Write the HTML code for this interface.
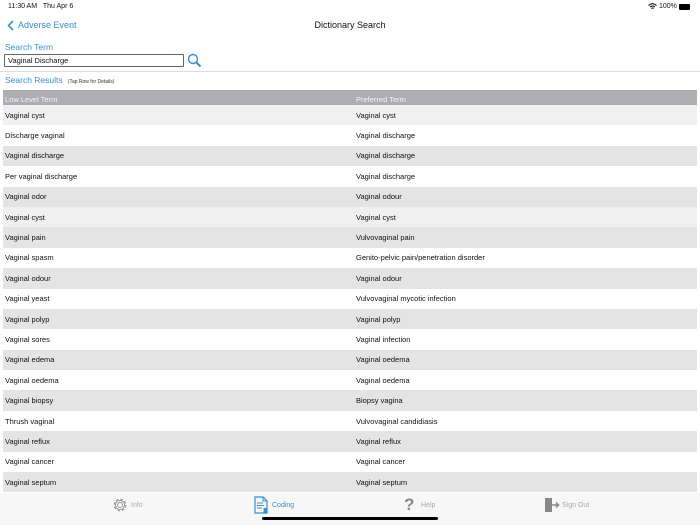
<!DOCTYPE html>
<html><head><meta charset="utf-8"><style>
*{margin:0;padding:0;box-sizing:border-box}
body{width:700px;height:525px;overflow:hidden;background:#fff;font-family:"Liberation Sans",sans-serif;position:relative;color:#111}
.abs{position:absolute}
.blue{color:#3a8fd0}
table{position:absolute;left:3px;top:90px;width:694px;border-collapse:collapse;font-size:7.5px}
td{height:20.4px;padding-left:2px;vertical-align:middle}
td+td{padding-left:0}
tr.h td{height:15px;background:#aeadb2;color:#f4f4f4;padding-top:4px}
.a{background:#f0f0f0}.b{background:#fff}.c{background:#e4e4e4}
</style></head><body>
<div class="abs" style="left:8px;top:3px;font-size:7px">11:30 AM&nbsp;&nbsp;&nbsp;Thu Apr 6</div>
<div class="abs" style="left:659px;top:3px;font-size:7px">
<svg width="9" height="7" viewBox="0 0 9 7" style="position:absolute;left:-11px;top:0"><path d="M0.5 2.5Q4.5 -1 8.5 2.5M2 4Q4.5 2 7 4M3.3 5.4Q4.5 4.5 5.7 5.4" stroke="#000" fill="none" stroke-width="1"/></svg>100%</div>
<div class="abs" style="left:679px;top:4px;width:11px;height:6px;background:#000;border-radius:1px"></div>
<svg class="abs" style="left:7px;top:20px" width="7" height="11" viewBox="0 0 7 11"><path d="M6 1L1.5 5.5L6 10" stroke="#3a8fd0" stroke-width="1.6" fill="none"/></svg>
<div class="abs blue" style="left:18px;top:20px;font-size:9px">Adverse Event</div>
<div class="abs" style="left:0;width:700px;top:20px;text-align:center;font-size:9px">Dictionary Search</div>
<div class="abs blue" style="left:5px;top:42px;font-size:8.5px">Search Term</div>
<div class="abs" style="left:4px;top:54px;width:180px;height:13px;border:1px solid #666;border-radius:1px;font-size:7.5px;padding:1px 0 0 3px">Vaginal Discharge</div>
<svg class="abs" style="left:187px;top:53px" width="15" height="15" viewBox="0 0 15 15"><circle cx="6" cy="6" r="4.5" stroke="#3a8fd0" stroke-width="1.4" fill="none"/><path d="M9.3 9.3L13.5 13.5" stroke="#3a8fd0" stroke-width="2"/></svg>
<div class="abs" style="left:0;top:71px;width:700px;height:1px;background:#ddd"></div>
<div class="abs blue" style="left:5px;top:75px;font-size:8.5px">Search Results <span style="color:#333;font-size:5px">&nbsp;&nbsp;(Tap Row for Details)</span></div>
<table>
<col style="width:353px"><col>
<tr class="h"><td>Low Level Term</td><td>Preferred Term</td></tr>
<tr class="a"><td>Vaginal cyst</td><td>Vaginal cyst</td></tr>
<tr class="b"><td>Discharge vaginal</td><td>Vaginal discharge</td></tr>
<tr class="c"><td>Vaginal discharge</td><td>Vaginal discharge</td></tr>
<tr class="b"><td>Per vaginal discharge</td><td>Vaginal discharge</td></tr>
<tr class="c"><td>Vaginal odor</td><td>Vaginal odour</td></tr>
<tr class="a"><td>Vaginal cyst</td><td>Vaginal cyst</td></tr>
<tr class="c"><td>Vaginal pain</td><td>Vulvovaginal pain</td></tr>
<tr class="b"><td>Vaginal spasm</td><td>Genito-pelvic pain/penetration disorder</td></tr>
<tr class="c"><td>Vaginal odour</td><td>Vaginal odour</td></tr>
<tr class="b"><td>Vaginal yeast</td><td>Vulvovaginal mycotic infection</td></tr>
<tr class="c"><td>Vaginal polyp</td><td>Vaginal polyp</td></tr>
<tr class="b"><td>Vaginal sores</td><td>Vaginal infection</td></tr>
<tr class="c"><td>Vaginal edema</td><td>Vaginal oedema</td></tr>
<tr class="b"><td>Vaginal oedema</td><td>Vaginal oedema</td></tr>
<tr class="c"><td>Vaginal biopsy</td><td>Biopsy vagina</td></tr>
<tr class="b"><td>Thrush vaginal</td><td>Vulvovaginal candidiasis</td></tr>
<tr class="c"><td>Vaginal reflux</td><td>Vaginal reflux</td></tr>
<tr class="b"><td>Vaginal cancer</td><td>Vaginal cancer</td></tr>
<tr class="c"><td>Vaginal septum</td><td>Vaginal septum</td></tr>
</table>
<div class="abs" style="left:0;top:493px;width:700px;height:32px;background:#f7f7f7"></div>
<svg class="abs" style="left:112px;top:497px" width="16" height="16" viewBox="0 0 16 16"><circle cx="8" cy="8" r="2.5" stroke="#999" fill="none"/><circle cx="8" cy="8" r="5.8" stroke="#999" stroke-width="1.2" fill="none" stroke-dasharray="2.4 2.2"/><circle cx="8" cy="8" r="4.6" stroke="#999" fill="none"/></svg>
<div class="abs" style="left:131px;top:502px;font-size:7px;color:#aaa">Info</div>
<svg class="abs" style="left:254px;top:496px" width="15" height="19" viewBox="0 0 15 19"><path d="M1 1H9L13 5V17H1Z" stroke="#3a8fd0" fill="none" stroke-width="1.2"/><path d="M9 1V5H13" stroke="#3a8fd0" fill="none"/><path d="M3 7H9M3 9.5H10M3 12H8" stroke="#3a8fd0"/><rect x="9.5" y="12" width="3.5" height="5" fill="#3a8fd0"/></svg>
<div class="abs blue" style="left:272px;top:502px;font-size:7px">Coding</div>
<div class="abs" style="left:404px;top:495px;font-size:17px;font-weight:bold;color:#888">?</div>
<div class="abs" style="left:421px;top:502px;font-size:7px;color:#aaa">Help</div>
<svg class="abs" style="left:544px;top:497px" width="16" height="16" viewBox="0 0 16 16"><path d="M1 1H8V15H1Z" fill="#888"/><path d="M8 8H14.5M12 5.5L14.5 8L12 10.5" stroke="#888" stroke-width="1.5" fill="none"/></svg>
<div class="abs" style="left:562px;top:502px;font-size:7px;color:#aaa">Sign Out</div>
<div class="abs" style="left:262px;top:517px;width:176px;height:3px;border-radius:2px;background:#000"></div>
</body></html>
